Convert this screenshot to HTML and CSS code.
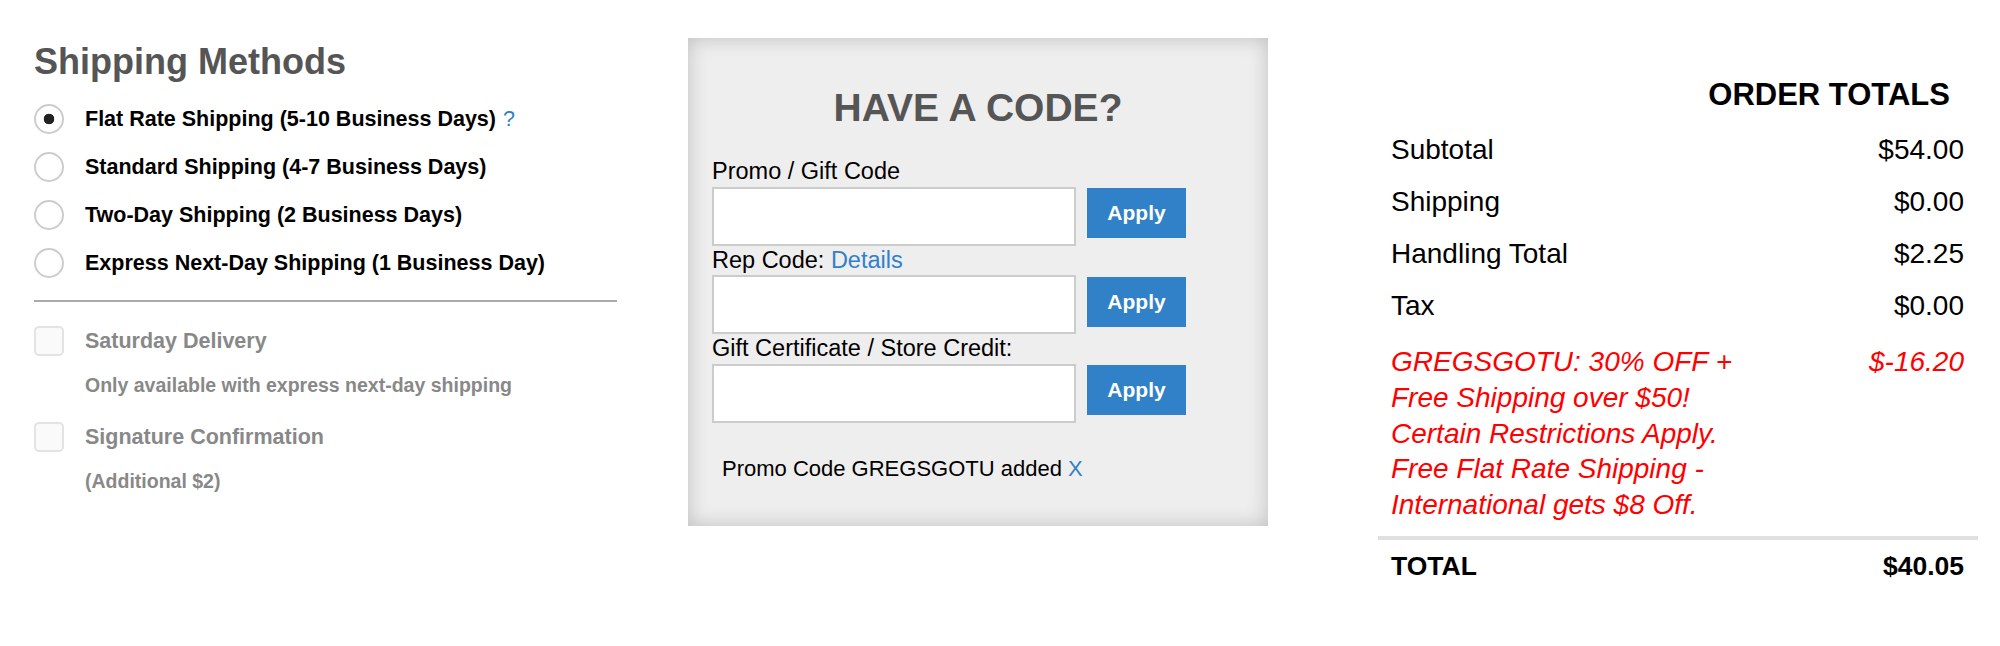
FILE: index.html
```html
<!DOCTYPE html>
<html lang="en">
<head>
  <meta charset="UTF-8">
  <title>Checkout - Shipping &amp; Totals</title>
  <link rel="stylesheet" href="styles.css">
</head>
<body>
  <div class="checkout">

    <!-- Shipping methods -->
    <section class="shipping">
      <h2>Shipping Methods</h2>
      <ul class="methods">
        <li><label><input type="radio" name="ship" checked>Flat Rate Shipping (5-10 Business Days)</label><a class="help" href="#">?</a></li>
        <li><label><input type="radio" name="ship">Standard Shipping (4-7 Business Days)</label></li>
        <li><label><input type="radio" name="ship">Two-Day Shipping (2 Business Days)</label></li>
        <li><label><input type="radio" name="ship">Express Next-Day Shipping (1 Business Day)</label></li>
      </ul>
      <hr>
      <label class="option"><input type="checkbox" disabled>Saturday Delivery</label>
      <p class="note">Only available with express next-day shipping</p>
      <label class="option"><input type="checkbox" disabled>Signature Confirmation</label>
      <p class="note">(Additional $2)</p>
    </section>

    <!-- Promo codes -->
    <section class="codes">
      <h2>HAVE A CODE?</h2>
      <div class="field first">
        <label for="promo">Promo / Gift Code</label>
        <div class="field-row">
          <input type="text" id="promo">
          <button>Apply</button>
        </div>
      </div>
      <div class="field">
        <label for="rep">Rep Code: <a href="#">Details</a></label>
        <div class="field-row">
          <input type="text" id="rep">
          <button>Apply</button>
        </div>
      </div>
      <div class="field">
        <label for="credit">Gift Certificate / Store Credit:</label>
        <div class="field-row">
          <input type="text" id="credit">
          <button>Apply</button>
        </div>
      </div>
      <p class="applied">Promo Code GREGSGOTU added <a href="#">X</a></p>
    </section>

    <!-- Order totals -->
    <section class="totals">
      <h2>ORDER TOTALS</h2>
      <div class="line first"><span>Subtotal</span><span>$54.00</span></div>
      <div class="line"><span>Shipping</span><span>$0.00</span></div>
      <div class="line"><span>Handling Total</span><span>$2.25</span></div>
      <div class="line"><span>Tax</span><span>$0.00</span></div>
      <div class="line discount">
        <span class="desc">GREGSGOTU: 30% OFF + Free Shipping over $50! Certain Restrictions Apply. Free Flat Rate Shipping - International gets $8 Off.</span>
        <span>$-16.20</span>
      </div>
      <div class="line grand"><span>TOTAL</span><span>$40.05</span></div>
    </section>

  </div>
</body>
</html>
```

FILE: styles.css
```css
body {
  margin: 0;
  font-family: "Liberation Sans", Arial, Helvetica, sans-serif;
  color: #000;
  background: #fff;
}
a {
  color: #3081c8;
  text-decoration: none;
}
.checkout {
  display: flex;
  align-items: flex-start;
  padding-left: 34px;
}

/* shipping column */
.shipping {
  width: 583px;
  padding-top: 42px;
}
.shipping h2 {
  margin: 0;
  font-size: 36px;
  line-height: 40px;
  color: #555;
}
.methods {
  list-style: none;
  margin: 13px 0 0;
  padding: 0;
}
.methods li {
  display: flex;
  align-items: center;
  height: 48px;
  font-size: 21.5px;
  font-weight: bold;
}
.methods label,
.option {
  display: flex;
  align-items: center;
  gap: 21px;
}
.help {
  margin-left: 7px;
  font-weight: normal;
}
input[type="radio"],
input[type="checkbox"] {
  appearance: none;
  -webkit-appearance: none;
  flex: none;
  box-sizing: border-box;
  width: 30px;
  height: 30px;
  margin: 0;
}
input[type="radio"] {
  border: 2px solid #ccc;
  border-radius: 50%;
  background: #fff;
}
input[type="radio"]:checked {
  background: radial-gradient(circle, #222 0 5px, #fff 5.6px);
}
input[type="checkbox"] {
  border: 2px solid #e3e3e3;
  border-radius: 5px;
  background: #fafafa;
}
.shipping hr {
  margin: 13px 0 0;
  border: 0;
  height: 2px;
  background: #aaa;
}
.option {
  height: 40px;
  margin-top: 19px;
  font-size: 21.5px;
  font-weight: bold;
  color: #888;
}
.note + .option {
  margin-top: 20px;
}
.note {
  margin: 12px 0 0 51px;
  font-size: 19.5px;
  line-height: 24px;
  font-weight: bold;
  color: #888;
}

/* promo code box */
.codes {
  width: 580px;
  box-sizing: border-box;
  margin: 38px 0 0 71px;
  padding: 0 24px 44px;
  background: #eee;
  box-shadow: inset 0 0 20px rgba(0,0,0,0.2);
}
.codes h2 {
  margin: 47.5px 0 0;
  text-align: center;
  font-size: 39px;
  line-height: 44px;
  color: #555;
}
.field.first {
  margin-top: 27.5px;
}
.field label {
  display: block;
  font-size: 23.5px;
  line-height: 29.5px;
}
.field-row {
  display: flex;
  align-items: flex-start;
  gap: 11px;
}
.field input {
  width: 364px;
  height: 59px;
  box-sizing: border-box;
  margin: 0;
  padding: 0 10px;
  border: 2px solid #ccc;
  border-radius: 0;
  background: #fff;
  font-size: 20px;
}
.field button {
  width: 99px;
  height: 50px;
  margin-top: 1.5px;
  border: 0;
  border-radius: 0;
  background: #3081c8;
  color: #fff;
  font-family: inherit;
  font-size: 21px;
  font-weight: bold;
  cursor: pointer;
}
.applied {
  margin: 33px 0 0 10px;
  font-size: 22px;
  line-height: 26px;
}

/* totals column */
.totals {
  width: 600px;
  margin: 77px 0 0 110px;
}
.totals h2 {
  margin: 0;
  padding-right: 28px;
  text-align: right;
  font-size: 31px;
  line-height: 36px;
}
.line {
  display: flex;
  justify-content: space-between;
  align-items: flex-start;
  padding: 0 14px 0 13px;
  font-size: 28px;
  line-height: 52px;
}
.line.first {
  margin-top: 11px;
}
.discount {
  margin-top: 12px;
  color: #f00;
  font-style: italic;
  line-height: 35.8px;
}
.discount .desc {
  width: 350px;
}
.grand {
  margin-top: 13px;
  padding-top: 8.5px;
  border-top: 4px solid #e0e0e0;
  font-size: 26.5px;
  font-weight: bold;
  line-height: 36px;
}
```
